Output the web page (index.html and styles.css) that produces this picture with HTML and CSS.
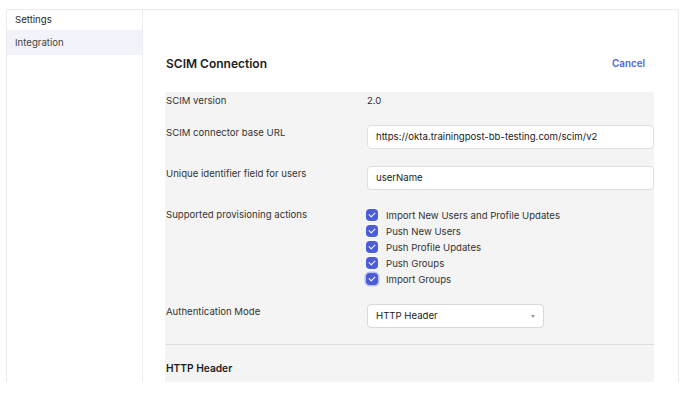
FILE: index.html
```html
<html>
	<head>
		<link rel="stylesheet" href="styles.css">
	</head>
	<body>
		<div class="card">
			<div class="sidebar">
				<div class="side-title">Settings</div>
				<div class="side-item active">Integration</div>
			</div>
			<div class="main">
				<div class="head">
					<h1>SCIM Connection</h1>
					<a class="cancel">Cancel</a>
				</div>
				<div class="panel">
					<div class="row first">
						<div class="label">SCIM version</div>
						<div class="value">2.0</div>
					</div>
					<div class="row">
						<div class="label">SCIM connector base URL</div>
						<div class="field">https://okta.trainingpost-bb-testing.com/scim/v2</div>
					</div>
					<div class="row">
						<div class="label">Unique identifier field for users</div>
						<div class="field">userName</div>
					</div>
					<div class="row">
						<div class="label tall">Supported provisioning actions</div>
						<div class="checks">
							<div class="check"><span class="box"></span>Import New Users and Profile Updates</div>
							<div class="check"><span class="box"></span>Push New Users</div>
							<div class="check"><span class="box"></span>Push Profile Updates</div>
							<div class="check"><span class="box"></span>Push Groups</div>
							<div class="check"><span class="box focus"></span>Import Groups</div>
						</div>
					</div>
					<div class="row">
						<div class="label">Authentication Mode</div>
						<div class="field select">HTTP Header<span class="caret"></span></div>
					</div>
					<div class="divider"></div>
					<h2>HTTP Header</h2>
				</div>
			</div>
		</div>
	</body>
</html>
```
FILE: styles.css
```css
body {
	margin: 0;
	padding: 9px 0 0 6px;
	background: #fff;
	font-family: Inter, "Liberation Sans", sans-serif;
	color: #333;
}
.card {
	display: flex;
	width: 671px;
	height: 372px;
	overflow: hidden;
	border: 1px solid #ebebeb;
	border-bottom: none;
	border-radius: 3px 3px 0 0;
}
.sidebar {
	width: 135px;
	flex: none;
	border-right: 1px solid #ececec;
	font-size: 9.6px;
}
.side-title {
	height: 20px;
	line-height: 20px;
	padding-left: 8px;
	color: #1f1f1f;
}
.side-item {
	height: 25px;
	line-height: 25px;
	padding-left: 8px;
	color: #444;
}
.side-item.active { background: #f2f2fb; }
.main {
	flex: 1;
	padding: 0 24px 0 22px;
}
.head {
	height: 82px;
	display: flex;
	align-items: center;
	justify-content: space-between;
	padding: 24px 9px 0 1px;
	box-sizing: border-box;
}
h1 {
	margin: 0;
	font-size: 12px;
	font-weight: 600;
	color: #1d1d1d;
}
.cancel {
	font-size: 9.8px;
	font-weight: 600;
	color: #5063dc;
}
.panel {
	background: #f4f4f4;
	height: 291px;
	padding: 0 0 0 1px;
	font-size: 9.6px;
}
.row {
	display: grid;
	grid-template-columns: 201px 1fr;
	align-items: start;
	margin-top: 17px;
}
.row.first { margin-top: 0; padding-top: 1px; }
.label, .value {
	line-height: 15px;
	color: #333;
}
.label.tall { line-height: 16px; }
.field {
	height: 22px;
	line-height: 22px;
	background: #fff;
	border: 1px solid #dedede;
	border-radius: 4px;
	padding-left: 8px;
	color: #222;
}
.field.select {
	width: 167px;
	position: relative;
	border-color: #d9d9d9;
}
.caret {
	position: absolute;
	right: 8px;
	top: 10px;
	border: 2.5px solid transparent;
	border-top: 3px solid #999;
	border-bottom: none;
}
.checks { display: flex; flex-direction: column; }
.check {
	height: 16px;
	display: flex;
	align-items: center;
	color: #333;
}
.box {
	width: 12px;
	height: 12px;
	border-radius: 4px;
	background: #4c5bd6;
	margin: 0 8px 0 -1px;
	position: relative;
}
.box:after {
	content: "";
	position: absolute;
	left: 4px;
	top: 2px;
	width: 3px;
	height: 5px;
	border: solid #fff;
	border-width: 0 1.5px 1.5px 0;
	transform: rotate(45deg);
}
.box.focus { box-shadow: 0 0 0 1.5px #b9c0f0; }
.divider {
	height: 1px;
	background: #dcdcdc;
	margin-top: 16px;
}
h2 {
	margin: 17px 0 0;
	font-size: 10.2px;
	font-weight: 600;
	color: #1d1d1d;
}
```
